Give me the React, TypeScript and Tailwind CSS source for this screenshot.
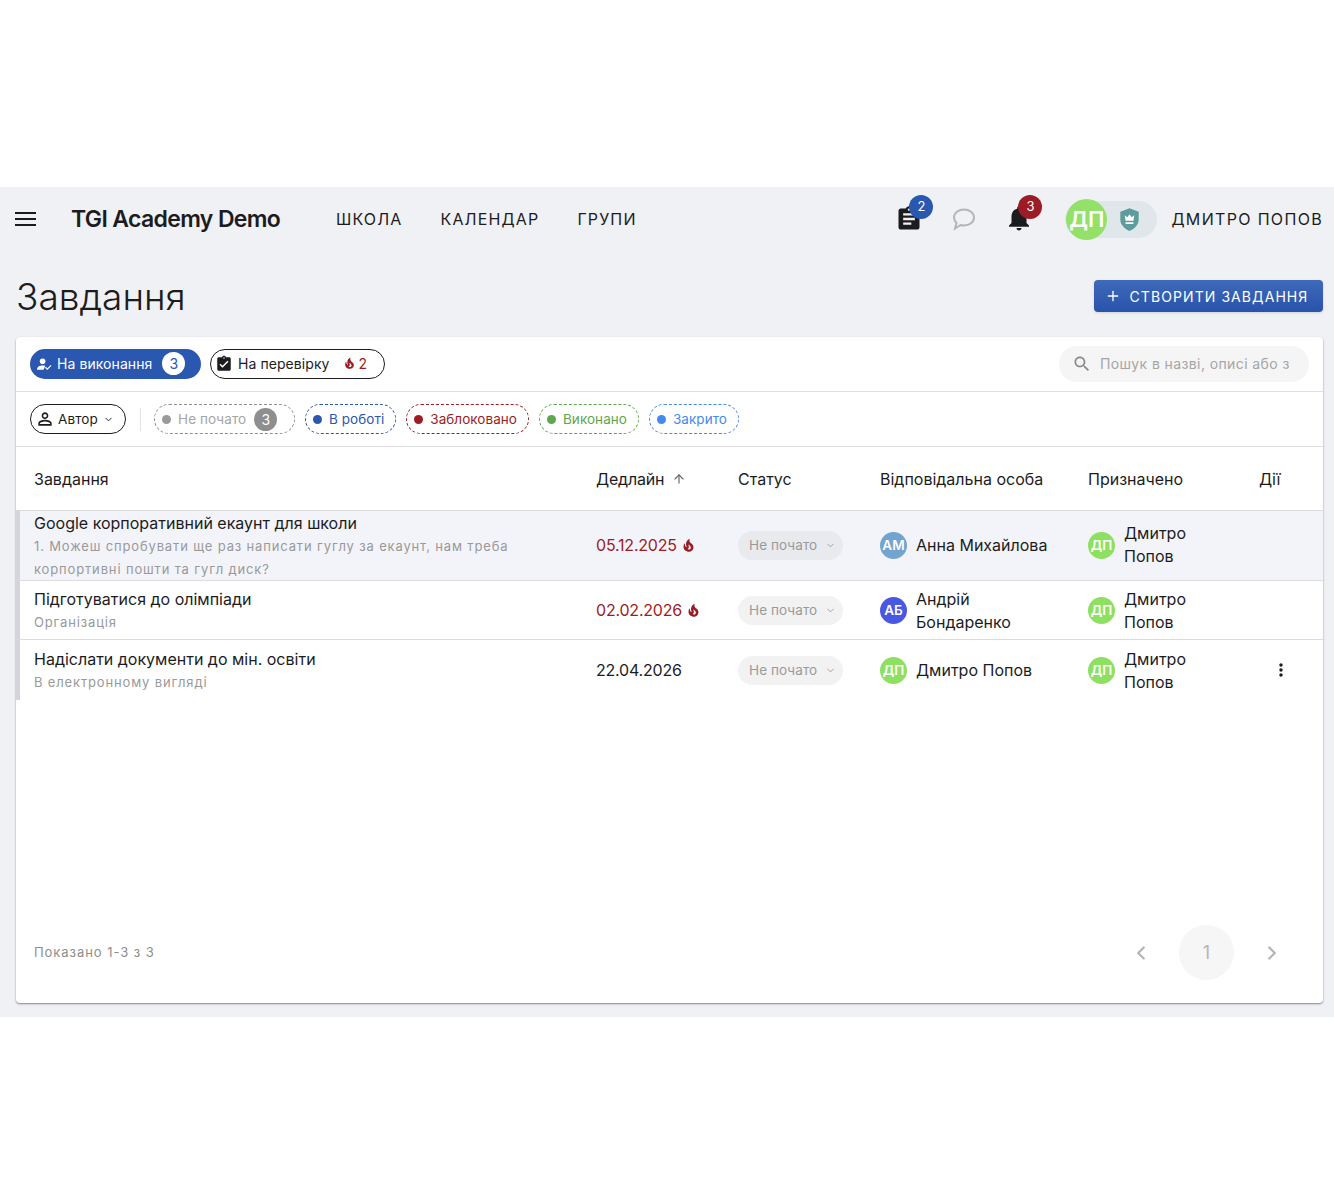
import { ArrowUp, ChevronDown, ChevronLeft, ChevronRight, Plus } from "lucide-react";

const font = "font-['Inter','Noto_Sans',sans-serif]";
const grid = "grid grid-cols-[562px_142px_142px_208px_171px_1fr] grid-rows-[minmax(0,1fr)] items-center";

const tasks = [
  {
    title: "Google корпоративний екаунт для школи",
    desc: ["1. Можеш спробувати ще раз написати гуглу за екаунт, нам треба", "корпортивні пошти та гугл диск?"],
    date: "05.12.2025",
    hot: true,
    person: { initials: "АМ", color: "bg-[#73a4cf]", name: ["Анна Михайлова"] },
    height: "h-[70px] pb-[1px]",
    active: true,
  },
  {
    title: "Підготуватися до олімпіади",
    desc: ["Організація"],
    date: "02.02.2026",
    hot: true,
    person: { initials: "АБ", color: "bg-[#4a57e3]", name: ["Андрій", "Бондаренко"] },
    height: "h-[59px]",
  },
  {
    title: "Надіслати документи до мін. освіти",
    desc: ["В електронному вигляді"],
    date: "22.04.2026",
    person: { initials: "ДП", color: "bg-[#8ee062]", name: ["Дмитро Попов"] },
    height: "h-[61px]",
    menu: true,
  },
];

const statuses = [
  { label: "В роботі", text: "text-[#2a57b0]", border: "border-[#2a57b0]", dot: "bg-[#2a57b0]" },
  { label: "Заблоковано", text: "text-[#9b1c24]", border: "border-[#9b1c24]", dot: "bg-[#9b1c24]" },
  { label: "Виконано", text: "text-[#5fa64d]", border: "border-[#5fa64d]", dot: "bg-[#5fa64d]" },
  { label: "Закрито", text: "text-[#4489ee]", border: "border-[#4489ee]", dot: "bg-[#4489ee]" },
];

function Flame({ className }: { className?: string }) {
  return (
    <svg viewBox="0 0 24 24" className={className} fill="currentColor">
      <path d="M19.48 12.35c-1.57-4.08-7.16-4.3-5.81-10.23.1-.44-.37-.78-.75-.55C9.29 3.71 6.68 8 8.87 13.62c.18.46-.36.89-.75.59-1.81-1.37-2-3.34-1.84-4.75.06-.52-.62-.77-.91-.34C4.69 10.16 4 11.84 4 14.37c.38 5.6 5.11 7.32 6.81 7.54 2.43.31 5.06-.14 6.95-1.87 2.08-1.93 2.84-5.01 1.72-7.69zm-9.28 5.03c1.44-.35 2.18-1.39 2.38-2.31.33-1.43-.96-2.83-.09-5.09.33 1.87 3.27 3.04 3.27 5.08.08 2.53-2.66 4.7-5.56 2.32z" />
    </svg>
  );
}

function Avatar({ initials, color }: { initials: string; color: string }) {
  return (
    <div className={`w-[27px] h-[27px] text-[13.5px] ${color} rounded-full flex items-center justify-center text-white font-semibold shrink-0`}>
      {initials}
    </div>
  );
}

function Badge({ value, color, top }: { value: number; color: string; top: string }) {
  return (
    <span className={`absolute left-[14px] ${top} w-6 h-6 rounded-full ${color} text-white text-[13px] flex items-center justify-center`}>
      {value}
    </span>
  );
}

export default function App() {
  return (
    <div className={`${font} bg-white h-[1204px] pt-[187px] text-[#1c1c1e]`}>
      <div className="bg-[#f0f1f5] h-[830px] flex flex-col">
        <header className="h-[64px] flex items-center pl-[15px] pr-[11px] shrink-0">
          <div className="w-[21px] flex flex-col gap-[4px]">
            <span className="h-[2px] bg-[#1c1c1e]" />
            <span className="h-[2px] bg-[#1c1c1e]" />
            <span className="h-[2px] bg-[#1c1c1e]" />
          </div>
          <div className="ml-[35px] text-[23px] font-semibold tracking-[-0.65px] w-[265px] whitespace-nowrap">TGI Academy Demo</div>
          <nav className="flex gap-[38px] text-[16px] tracking-[1.15px]">
            <span>ШКОЛА</span>
            <span>КАЛЕНДАР</span>
            <span>ГРУПИ</span>
          </nav>
          <div className="ml-auto flex items-center">
            <div className="relative w-[28px] h-[28px] mr-[29px]">
              <svg viewBox="0 0 24 24" className="w-[28px] h-[28px]" fill="#1c1c1e">
                <path d="M19 3h-4.18C14.4 1.84 13.3 1 12 1c-1.3 0-2.4.84-2.82 2H5c-1.1 0-2 .9-2 2v14c0 1.1.9 2 2 2h14c1.1 0 2-.9 2-2V5c0-1.1-.9-2-2-2zm-7 0c.55 0 1 .45 1 1s-.45 1-1 1-1-.45-1-1 .45-1 1-1zm2 14H7v-2h7v2zm3-4H7v-2h10v2zm0-4H7V7h10v2z" />
              </svg>
              <Badge value={2} color="bg-[#2a57b0]" top="-top-[10px]" />
            </div>
            <svg viewBox="0 0 24 24" className="w-[24px] h-[24px] mr-[28px]" fill="none" stroke="#b5b5b5" strokeWidth="2">
              <path d="M12 2.500c5.500 0 10 3.300 10 8s-4.500 8-10 8c-1.200 0-2.400-.2-3.400-.5L3 21.500l1.500-5.500C3 14.500 2 12.700 2 10.500c0-4.700 4.500-8 10-8z" />
            </svg>
            <div className="relative w-[30px] h-[30px] mr-[31px] mb-[2px]">
              <svg viewBox="0 0 24 24" className="w-[30px] h-[30px]" fill="#1c1c1e">
                <path d="M12 22c1.100 0 2-.9 2-2h-4c0 1.100.89 2 2 2zm6-6v-5c0-3.070-1.640-5.640-4.500-6.320V4c0-.83-.67-1.500-1.500-1.500s-1.500.67-1.500 1.500v.68C7.630 5.360 6 7.920 6 11v5l-2 2v1h16v-1l-2-2z" />
              </svg>
              <Badge value={3} color="bg-[#9b1c24]" top="-top-[8px]" />
            </div>
            <div className="relative w-[92px] h-[37px] rounded-full bg-[#dfe7ea] mr-[14px] flex items-center">
              <div className="absolute left-[1px] -top-[2px] w-[41px] h-[41px] rounded-full bg-[#8ee062]/95 text-white text-[22px] font-semibold flex items-center justify-center">
                ДП
              </div>
              <svg viewBox="0 0 24 28" className="absolute left-[54px] top-[6px] w-[21px] h-[25px]">
                <path d="M12 1l10.500 4v9c0 6-4.500 10.500-10.500 13C6 24.500 1.500 20 1.500 14V5z" fill="#5c9c9a" />
                <path d="M6.500 9l3 2.500L12 8l2.500 3.500 3-2.500-1 6.500h-9zM7.500 17h9v2h-9z" fill="#fff" />
              </svg>
            </div>
            <span className="text-[16px] tracking-[1.33px] whitespace-nowrap">ДМИТРО ПОПОВ</span>
          </div>
        </header>

        <div className="flex items-center justify-between pl-[16px] pr-[11px] mt-[29px] h-[32px] shrink-0">
          <h1 className="text-[37px] font-light leading-[32px] pt-[2px]">Завдання</h1>
          <button className="h-[32px] w-[229px] rounded-[4px] bg-linear-to-b from-[#3f69b9] to-[#2953ac] text-white text-[14px] tracking-[1.08px] flex items-center justify-center gap-[9px] pr-[4px] shadow-sm">
            <Plus size={16} />
            СТВОРИТИ ЗАВДАННЯ
          </button>
        </div>

        <main className="ml-[16px] mr-[11px] mt-[25px] h-[666px] bg-white rounded-[4px] shadow-[0_1px_2px_rgba(0,0,0,0.45)] flex flex-col">
          <div className="h-[55px] border-b border-[#dedee0] flex items-center pl-[14px] pr-[14px] gap-[9px] shrink-0">
            <div className="h-[30px] w-[171px] pb-[1px] rounded-full bg-[#2a57b0] text-white text-[14px] tracking-[0.07px] flex items-center pl-[7px]">
              <svg viewBox="0 0 16 14" className="w-[15px] h-[14px]" fill="none">
                <circle cx="6" cy="4" r="3" fill="#fff" />
                <path d="M0 13c0-3 2.500-4.500 6-4.500 1 0 2 .1 2.800.4L7 13z" fill="#fff" />
                <path d="M9 10.500l2 2 4-4" stroke="#fff" strokeWidth="1.300" />
              </svg>
              <span className="ml-[5px]">На виконання</span>
              <span className="ml-[10px] w-[23px] h-[23px] rounded-full bg-white text-[#2a57b0] flex items-center justify-center">3</span>
            </div>
            <div className="h-[30px] w-[175px] pb-[1px] rounded-full border border-[#1c1c1e] text-[14px] tracking-[0.07px] flex items-center pl-[2px]">
              <svg viewBox="0 0 24 24" className="w-[18px] h-[18px] ml-[2px]" fill="#1c1c1e">
                <path d="M19 3h-4.180C14.400 1.840 13.300 1 12 1c-1.300 0-2.400.84-2.820 2H5c-1.100 0-2 .9-2 2v14c0 1.100.9 2 2 2h14c1.100 0 2-.9 2-2V5c0-1.100-.9-2-2-2zm-9 14-4-4 1.410-1.410L10 14.170l6.590-6.590L18 9l-8 8zm2-12c-.55 0-1-.45-1-1s.45-1 1-1 1 .45 1 1-.45 1-1 1z" />
              </svg>
              <span className="ml-[5px]">На перевірку</span>
              <Flame className="ml-[13px] w-[13px] h-[13px] text-[#9b1c24]" />
              <span className="ml-[3px] text-[#9b1c24]">2</span>
            </div>
            <div className="ml-auto h-[36px] w-[250px] pb-[1px] rounded-full bg-[#f5f5f6] flex items-center pl-[13px] text-[14px] tracking-[0.4px] text-[#a5a5a5]">
              <svg viewBox="0 0 24 24" className="w-[20px] h-[20px] shrink-0" fill="#8a8a8a">
                <path d="M15.500 14h-.79l-.28-.27C15.410 12.590 16 11.110 16 9.500 16 5.910 13.090 3 9.500 3S3 5.910 3 9.500 5.910 16 9.500 16c1.610 0 3.090-.59 4.230-1.570l.27.28v.79l5 4.990L20.490 19l-4.990-5zm-6 0C7.010 14 5 11.990 5 9.500S7.010 5 9.500 5 14 7.010 14 9.500 11.990 14 9.500 14z" />
              </svg>
              <span className="ml-[8px] w-[189px] overflow-hidden whitespace-nowrap">Пошук в назві, описі або завданні</span>
            </div>
          </div>

          <div className="h-[55px] border-b border-[#dedee0] flex items-center pl-[14px] shrink-0">
            <div className="h-[30px] w-[96px] rounded-full border border-[#1c1c1e] text-[13.5px] tracking-[0.1px] flex items-center pl-[4px]">
              <svg viewBox="0 0 24 24" className="w-[20px] h-[20px]" fill="#1c1c1e">
                <path d="M12 5.900c1.160 0 2.100.94 2.100 2.100s-.94 2.100-2.100 2.100S9.900 9.160 9.900 8s.94-2.100 2.100-2.100m0 9c2.970 0 6.100 1.460 6.100 2.100v1.100H5.900V17c0-.64 3.130-2.100 6.100-2.100M12 4C9.790 4 8 5.790 8 8s1.790 4 4 4 4-1.790 4-4-1.790-4-4-4zm0 9c-2.670 0-8 1.340-8 4v3h16v-3c0-2.660-5.330-4-8-4z" />
              </svg>
              <span className="ml-[3px]">Автор</span>
              <ChevronDown size={11} className="ml-[5px]" />
            </div>
            <div className="w-px h-[23px] bg-[#e3e3e5] ml-[14px] mr-[13px]" />
            <div className="h-[30px] w-[141px] rounded-full border border-dashed border-[#8e8e8e] text-[13.5px] tracking-[0.1px] text-[#a5a5a5] flex items-center pl-[7px]">
              <span className="w-[9px] h-[9px] rounded-full bg-[#9a9a9a]" />
              <span className="ml-[7px]">Не почато</span>
              <span className="ml-[8px] w-[23px] h-[23px] rounded-full bg-[#8e8e8e] text-white text-[14px] flex items-center justify-center">3</span>
            </div>
            <div className="flex gap-[10px] ml-[10px]">
              {statuses.map((s) => (
                <div key={s.label} className={`h-[30px] rounded-full border border-dashed ${s.border} ${s.text} text-[13.5px] tracking-[0.05px] flex items-center pl-[7px] pr-[11px]`}>
                  <span className={`w-[9px] h-[9px] rounded-full ${s.dot}`} />
                  <span className="ml-[7px]">{s.label}</span>
                </div>
              ))}
            </div>
          </div>

          <div className={`${grid} h-[63px] pl-[18px] text-[16px] shrink-0`}>
            <span>Завдання</span>
            <span className="flex items-center gap-[8px] tracking-[-0.2px]">Дедлайн <ArrowUp size={14} className="text-[#666]" /></span>
            <span>Статус</span>
            <span>Відповідальна особа</span>
            <span>Призначено</span>
            <span>Дії</span>
          </div>

          {tasks.map((t) => (
            <div
              key={t.title}
              className={`${grid} ${t.height} pl-[14px] border-l-[4px] border-l-[#d3d5da] border-t border-t-[#dcdcde] ${t.active ? "bg-[#f3f4fa]" : ""} shrink-0`}
            >
              <div className="min-w-0 pt-[2px]">
                <div className="text-[16px] leading-[23px] whitespace-nowrap">{t.title}</div>
                {t.desc.map((line) => (
                  <div key={line} className="text-[13px] leading-[23px] tracking-[0.85px] text-[#999] whitespace-nowrap">{line}</div>
                ))}
              </div>
              <div className={`flex items-center gap-[4px] text-[16px] tracking-[-0.2px] ${t.hot ? "text-[#9b1c24]" : ""}`}>
                {t.date}
                {t.hot && <Flame className="w-[15px] h-[15px]" />}
              </div>
              <div>
                <div className={`w-[105px] h-[29px] rounded-full ${t.active ? "bg-[#e9eaee]" : "bg-[#f2f2f3]"} text-[#9a9a9a] text-[13.5px] tracking-[0.1px] flex items-center pl-[11px]`}>
                  Не почато
                  <ChevronDown size={11} className="ml-[8px]" />
                </div>
              </div>
              <div className="flex items-center gap-[9px]">
                <Avatar initials={t.person.initials} color={t.person.color} />
                <div className={`text-[16px] leading-[23px] ${t.person.name.length > 1 ? "pt-[2px]" : ""}`}>
                  {t.person.name.map((n) => <div key={n}>{n}</div>)}
                </div>
              </div>
              <div className="flex items-center gap-[9px]">
                <Avatar initials="ДП" color="bg-[#8ee062]" />
                <div className={`text-[16px] leading-[23px] ${t.active ? "" : "pt-[2px]"}`}>
                  <div>Дмитро</div>
                  <div>Попов</div>
                </div>
              </div>
              <div className="pl-[12px]">
                {t.menu && (
                  <svg viewBox="0 0 24 24" className="w-[20px] h-[20px]" fill="#1c1c1e">
                    <path d="M12 8c1.100 0 2-.9 2-2s-.9-2-2-2-2 .9-2 2 .9 2 2 2zm0 2c-1.100 0-2 .9-2 2s.9 2 2 2 2-.9 2-2-.9-2-2-2zm0 6c-1.100 0-2 .9-2 2s.9 2 2 2 2-.9 2-2-.9-2-2-2z" />
                  </svg>
                )}
              </div>
            </div>
          ))}

          <div className="mt-auto h-[102px] flex items-start justify-between pl-[18px] pr-[40px] pt-[24px] shrink-0">
            <span className="h-[55px] flex items-center text-[13px] tracking-[0.95px] text-[#8e8e8e]">Показано 1-3 з 3</span>
            <div className="flex items-center">
              <ChevronLeft size={22} strokeWidth={2.5} className="text-[#b5b5b5]" />
              <div className="mx-[27px] w-[55px] h-[55px] rounded-full bg-[#f6f6f7] text-[#b5b5b5] text-[18px] flex items-center justify-center">1</div>
              <ChevronRight size={22} strokeWidth={2.5} className="text-[#b5b5b5]" />
            </div>
          </div>
        </main>
      </div>
    </div>
  );
}
